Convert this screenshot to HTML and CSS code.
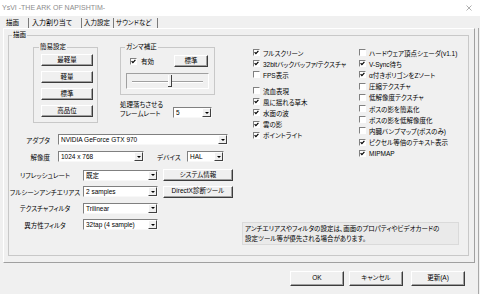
FILE: index.html
```html
<!DOCTYPE html>
<html lang="ja">
<head>
    <meta charset="UTF-8">
    <title>YsVI -THE ARK OF NAPISHTIM-</title>
    <link rel="stylesheet" href="styles.css">
</head>
<body>
    <div class="titlebar">
        <span class="title">YsVI -THE ARK OF NAPISHTIM-</span>
        <svg class="close" width="6" height="6" viewBox="0 0 6 6"><path d="M0.5 0.5 L5.5 5.5 M5.5 0.5 L0.5 5.5"/></svg>
    </div>
    <div class="window">
        <div class="tabs">
            <div class="tab t1">描画</div>
            <div class="tab t2">入力割り当て</div>
            <div class="tab t3">入力設定</div>
            <div class="tab t4">サウンドなど</div>
        </div>
        <div class="content">
            <div class="panel">
                <fieldset class="group main">
                    <legend>描画</legend>
                    <div class="main-grid">
                        <div class="left">
                            <div class="top-row">
                                <fieldset class="group presets">
                                    <legend>簡易設定</legend>
                                    <button class="btn">最軽量</button>
                                    <button class="btn">軽量</button>
                                    <button class="btn">標準</button>
                                    <button class="btn">高品位</button>
                                </fieldset>
                                <div class="gamma-col">
                                    <fieldset class="group gamma">
                                        <legend>ガンマ補正</legend>
                                        <div class="gamma-row">
                                            <div class="ck"><span class="cb"><svg viewBox="0 0 5 5"><path d="M0.6 2.2 L1.9 3.6 L4.4 0.9"/></svg></span>有効</div>
                                            <button class="btn std">標準</button>
                                        </div>
                                        <div class="slider">
                                            <svg width="81" height="14" viewBox="0 0 81 14">
                                                <line x1="5" y1="7.5" x2="76" y2="7.5" stroke="#a0a0a0"/>
                                                <line x1="5" y1="8.5" x2="76" y2="8.5" stroke="#ffffff"/>
                                                <rect x="41" y="1" width="4" height="12" fill="#f0f0f0"/>
                                                <line x1="41.5" y1="1" x2="41.5" y2="12" stroke="#ffffff"/>
                                                <line x1="44.5" y1="1" x2="44.5" y2="13" stroke="#404040"/>
                                                <line x1="41" y1="12.5" x2="45" y2="12.5" stroke="#404040"/>
                                            </svg>
                                        </div>
                                    </fieldset>
                                    <div class="frame-row">
                                        <span class="frame-label">処理落ちさせる<br>フレームレート</span>
                                        <div class="sel frame"><span class="val">5</span><span class="arr"></span></div>
                                    </div>
                                </div>
                            </div>
                            <div class="row adapter">
                                <span class="lab-r">アダプタ</span>
                                <div class="sel adapter-sel"><span class="val">NVIDIA GeForce GTX 970</span><span class="arr"></span></div>
                            </div>
                            <div class="row res">
                                <span class="lab-r">解像度</span>
                                <div class="sel res-sel"><span class="val">1024 x 768</span><span class="arr"></span></div>
                                <span class="dev-lab">デバイス</span>
                                <div class="sel dev-sel"><span class="val">HAL</span><span class="arr"></span></div>
                            </div>
                            <div class="opts">
                                <div class="opt">
                                    <span class="lab-c">リフレッシュレート</span>
                                    <div class="sel opt-sel"><span class="val">既定</span><span class="arr"></span></div>
                                    <button class="btn tool">システム情報</button>
                                </div>
                                <div class="opt">
                                    <span class="lab-c">フルシーンアンチエリアス</span>
                                    <div class="sel opt-sel"><span class="val">2 samples</span><span class="arr"></span></div>
                                    <button class="btn tool">DirectX診断ツール</button>
                                </div>
                                <div class="opt">
                                    <span class="lab-c">テクスチャフィルタ</span>
                                    <div class="sel opt-sel"><span class="val">Trilinear</span><span class="arr"></span></div>
                                </div>
                                <div class="opt">
                                    <span class="lab-c">異方性フィルタ</span>
                                    <div class="sel opt-sel"><span class="val">32tap (4 sample)</span><span class="arr"></span></div>
                                </div>
                            </div>
                        </div>
                        <div class="right">
                            <div class="checks">
                                <div class="col col1">
                                    <div class="ck"><span class="cb"><svg viewBox="0 0 5 5"><path d="M0.6 2.2 L1.9 3.6 L4.4 0.9"/></svg></span>フルスクリーン</div>
                                    <div class="ck"><span class="cb"><svg viewBox="0 0 5 5"><path d="M0.6 2.2 L1.9 3.6 L4.4 0.9"/></svg></span>32bitバックバッファ/テクスチャ</div>
                                    <div class="ck"><span class="cb"></span>FPS表示</div>
                                    <div class="ck gap"><span class="cb"></span>流血表現</div>
                                    <div class="ck"><span class="cb"><svg viewBox="0 0 5 5"><path d="M0.6 2.2 L1.9 3.6 L4.4 0.9"/></svg></span>風に揺れる草木</div>
                                    <div class="ck"><span class="cb"><svg viewBox="0 0 5 5"><path d="M0.6 2.2 L1.9 3.6 L4.4 0.9"/></svg></span>水面の波</div>
                                    <div class="ck"><span class="cb"><svg viewBox="0 0 5 5"><path d="M0.6 2.2 L1.9 3.6 L4.4 0.9"/></svg></span>雲の影</div>
                                    <div class="ck"><span class="cb"><svg viewBox="0 0 5 5"><path d="M0.6 2.2 L1.9 3.6 L4.4 0.9"/></svg></span>ポイントライト</div>
                                </div>
                                <div class="col col2">
                                    <div class="ck"><span class="cb"></span>ハードウェア頂点シェーダ(v1.1)</div>
                                    <div class="ck"><span class="cb"><svg viewBox="0 0 5 5"><path d="M0.6 2.2 L1.9 3.6 L4.4 0.9"/></svg></span>V-Sync待ち</div>
                                    <div class="ck"><span class="cb"><svg viewBox="0 0 5 5"><path d="M0.6 2.2 L1.9 3.6 L4.4 0.9"/></svg></span>α付きポリゴンをZソート</div>
                                    <div class="ck"><span class="cb"></span>圧縮テクスチャ</div>
                                    <div class="ck"><span class="cb"></span>低解像度テクスチャ</div>
                                    <div class="ck"><span class="cb"></span>ボスの影を簡素化</div>
                                    <div class="ck"><span class="cb"></span>ボスの影を低解像度化</div>
                                    <div class="ck"><span class="cb"></span>内臓バンプマップ(ボスのみ)</div>
                                    <div class="ck"><span class="cb"><svg viewBox="0 0 5 5"><path d="M0.6 2.2 L1.9 3.6 L4.4 0.9"/></svg></span>ピクセル等倍のテキスト表示</div>
                                    <div class="ck"><span class="cb"><svg viewBox="0 0 5 5"><path d="M0.6 2.2 L1.9 3.6 L4.4 0.9"/></svg></span>MIPMAP</div>
                                </div>
                            </div>
                            <div class="note">アンチエリアスやフィルタの設定は、画面のプロパティやビデオカードの<br>設定ツール等が優先される場合があります。</div>
                        </div>
                    </div>
                </fieldset>
            </div>
            <div class="footer">
                <button class="btn foot ok">OK</button>
                <button class="btn foot cancel">キャンセル</button>
                <button class="btn foot">更新(A)</button>
            </div>
        </div>
    </div>
</body>
</html>
```

FILE: styles.css
```css
* {
    box-sizing: border-box;
}
body {
    margin: 0;
    width: 480px;
    height: 294px;
    overflow: hidden;
    background-color: #f0f0f0;
    color: #000;
    font-family: "Liberation Sans", "Noto Sans CJK JP", sans-serif;
    font-size: 6.5px;
    font-feature-settings: "palt";
}
.titlebar {
    height: 16px;
    background-color: #fff;
    display: flex;
    align-items: center;
    justify-content: space-between;
    padding: 0 8px 0 2px;
}
.title {
    font-size: 7px;
    color: #8c8c8c;
    line-height: 1;
    margin-top: -2px;
}
.close {
    stroke: #9a9a9a;
    stroke-width: 0.8;
    fill: none;
    margin-top: -1px;
}
.window {
    width: 479px;
    height: 278px;
    padding-left: 2px;
}
.tabs {
    display: flex;
    height: 12px;
}
.tab {
    margin-top: 2px;
    height: 10px;
    line-height: 10px;
    border-right: 1px solid #7a7a7a;
    padding-left: 3px;
    white-space: nowrap;
}
.t1 { width: 27px; padding-left: 4px; }
.t2 { width: 53px; padding-left: 3px; font-size: 7px; }
.t3 { width: 32px; padding-left: 2px; }
.t4 { width: 44px; padding-left: 2px; }
.content {
    width: 477px;
    height: 266px;
    border-right: 1px solid #a8a8a8;
}
.panel {
    width: 472px;
    height: 235px;
    margin-left: 1px;
    border: 1px solid;
    border-color: #fff #a0a0a0 #a0a0a0 #fff;
    padding: 2px 0 0 4px;
}
.group {
    border: 1px solid #c8c8c8;
    margin: 0;
    padding: 0;
    min-width: 0;
}
.group legend {
    padding: 0 1px;
    height: 8px;
    line-height: 8px;
}
.main {
    width: 461px;
    height: 225px;
}
.main > legend {
    margin-left: 3px;
}
.main-grid {
    display: flex;
    height: 215px;
}
.left {
    width: 232px;
}
.top-row {
    display: flex;
    margin-top: 4px;
}
.presets {
    width: 65px;
    height: 80px;
    margin-left: 24px;
}
.presets legend {
    margin-left: 5px;
}
.btn {
    font: inherit;
    color: #000;
    background-color: #f0f0f0;
    border: 1px solid;
    border-color: #fff #3c3c3c #3c3c3c #fff;
    box-shadow: inset -1px -1px 0 #a0a0a0;
    padding: 0;
    line-height: 1;
    white-space: nowrap;
}
.presets .btn {
    display: block;
    width: 52px;
    height: 12px;
    margin: 0 0 5px 7px;
}
.presets .btn:first-of-type {
    margin-top: 3px;
}
.gamma-col {
    width: 95px;
    margin-left: 22px;
}
.gamma {
    width: 95px;
    height: 52px;
}
.gamma legend {
    margin-left: 4px;
}
.gamma-row {
    display: flex;
    align-items: center;
    justify-content: space-between;
    height: 12px;
    margin-top: 4px;
    padding: 0 6px 0 9px;
}
.btn.std {
    width: 34px;
    height: 12px;
}
.slider {
    width: 83px;
    height: 16px;
    margin: 6px 0 0 5px;
    border: 1px solid;
    border-color: #a0a0a0 #fff #fff #a0a0a0;
}
.slider svg {
    display: block;
}
.frame-row {
    display: flex;
    align-items: flex-end;
    margin-top: 6px;
}
.frame-label {
    width: 40px;
    line-height: 8.5px;
    white-space: nowrap;
}
.sel {
    display: flex;
    height: 11px;
    background-color: #fff;
    border: 1px solid;
    border-color: #808080 #f8f8f8 #f8f8f8 #808080;
}
.sel .val {
    flex: 1;
    padding-left: 2px;
    line-height: 9px;
    white-space: nowrap;
    overflow: hidden;
}
.sel .arr {
    width: 9px;
    height: 9px;
    background-color: #f0f0f0;
    border: 1px solid;
    border-color: #fff #404040 #404040 #fff;
    display: flex;
    align-items: center;
    justify-content: center;
}
.sel .arr::after {
    content: "";
    border-left: 2px solid transparent;
    border-right: 2px solid transparent;
    border-top: 2px solid #000;
}
.sel.frame {
    width: 39px;
    margin-left: 13px;
}
.row {
    display: flex;
    align-items: center;
}
.adapter {
    margin-top: 11px;
}
.res {
    margin-top: 6px;
}
.lab-r {
    width: 41px;
    margin-right: 8px;
    text-align: right;
    white-space: nowrap;
}
.adapter-sel {
    width: 170px;
}
.res-sel {
    width: 86px;
}
.dev-lab {
    width: 30px;
    margin-left: 13px;
    white-space: nowrap;
}
.dev-sel {
    width: 37px;
}
.opts {
    display: flex;
    flex-direction: column;
    gap: 4.5px;
    margin-top: 7px;
}
.opt {
    display: flex;
    align-items: center;
    height: 12px;
}
.lab-c {
    width: 72px;
    margin-right: 2px;
    text-align: center;
    white-space: nowrap;
}
.opt-sel {
    width: 75px;
}
.btn.tool {
    width: 70px;
    height: 12px;
    margin-left: 5px;
}
.right {
    flex: 1;
    display: flex;
    flex-direction: column;
}
.checks {
    display: flex;
    padding: 8px 0 0 12px;
}
.col1 {
    width: 106px;
}
.ck {
    display: flex;
    align-items: center;
    height: 11.2px;
    white-space: nowrap;
}
.ck.gap {
    margin-top: 4.4px;
}
.cb {
    flex: none;
    width: 7px;
    height: 7px;
    margin-right: 3px;
    background-color: #fff;
    border: 1px solid;
    border-color: #808080 #fff #fff #808080;
}
.cb svg {
    display: block;
    width: 5px;
    height: 5px;
    fill: none;
    stroke: #000;
    stroke-width: 1.2;
}
.gamma .cb {
    margin-right: 4px;
}
.note {
    width: 217px;
    height: 23px;
    margin: auto 0 9px 1px;
    padding: 1px 2px;
    line-height: 10px;
    background-color: #eaeaea;
    border: 1px solid #dadada;
    white-space: nowrap;
}
.footer {
    display: flex;
    justify-content: flex-end;
    padding: 8px 13px 0 0;
}
.btn.foot {
    width: 54px;
    height: 15px;
    margin-left: 8px;
}
.btn.foot.ok {
    margin-left: 0;
}
.btn.foot.cancel {
    margin-left: 5px;
}
```
